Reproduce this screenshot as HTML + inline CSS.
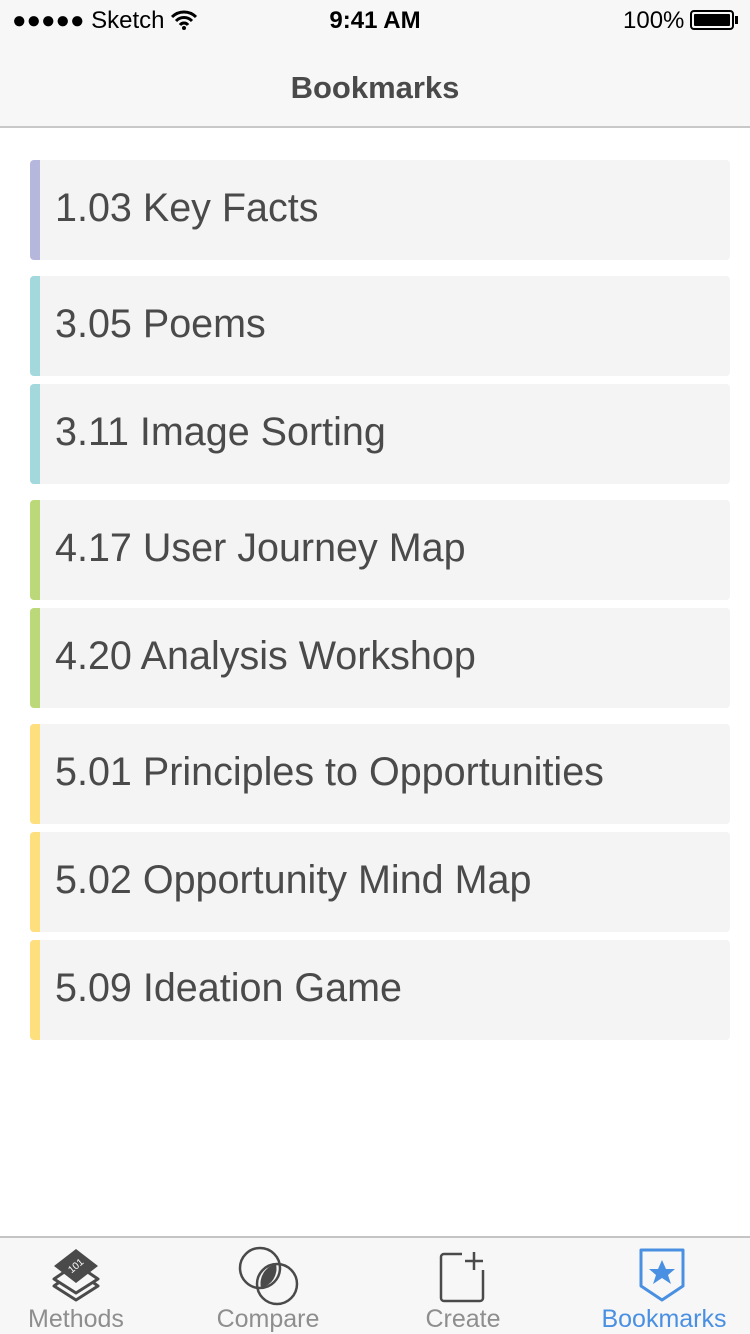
<!DOCTYPE html>
<html><head><style>
body{margin:0;width:750px;height:1334px;position:relative;background:#fff;font-family:"Liberation Sans",sans-serif;overflow:hidden}
.nav{position:absolute;left:0;top:0;width:750px;height:128px;background:#f7f7f7;border-bottom:2px solid #c8c8c8;box-sizing:border-box}
.sb{position:absolute;top:6px;font-size:24px;color:#000;line-height:30px}
.title{position:absolute;top:70px;width:750px;text-align:center;font-size:31px;font-weight:bold;color:#4a4a4a}
.it{position:absolute;left:30px;width:700px;height:100px;background:#f4f4f4;border-radius:4px;overflow:hidden}
.it i{position:absolute;left:0;top:0;width:10px;height:100px}
.it span{position:absolute;left:25px;top:0;line-height:96px;font-size:39.5px;color:#4a4a4a}
.tab{position:absolute;left:0;top:1236px;width:750px;height:98px;background:#f7f7f7;border-top:2px solid #c4c4c4;box-sizing:border-box}
.tl{position:absolute;top:1305px;font-size:25px;color:#8e8e8e;text-align:center;width:188px}
</style></head><body>
<div class="nav">
<div class="sb" style="left:12px">●●●●● Sketch
<svg width="26" height="20" viewBox="0 0 26 20" style="vertical-align:-2px"><path d="M1 7a17 17 0 0 1 24 0M5 11a11 11 0 0 1 16 0M9 15a5 5 0 0 1 8 0" stroke="#000" stroke-width="3" fill="none"/><circle cx="13" cy="18" r="2"/></svg></div>
<div class="sb" style="left:0;width:750px;text-align:center;font-weight:bold">9:41 AM</div>
<div class="sb" style="left:623px">100%</div>
<div style="position:absolute;left:690px;top:10px;width:44px;height:20px;border:2px solid #000;border-radius:4px;box-sizing:border-box;padding:2px"><div style="background:#000;width:100%;height:100%;border-radius:1px"></div></div>
<div style="position:absolute;left:735px;top:16px;width:3px;height:8px;background:#000"></div>
<div class="title">Bookmarks</div>
</div>
<div class="it" style="top:160px"><i style="background:#b6b7dc"></i><span>1.03 Key Facts</span></div>
<div class="it" style="top:276px"><i style="background:#a3d8dc"></i><span>3.05 Poems</span></div>
<div class="it" style="top:384px"><i style="background:#a3d8dc"></i><span>3.11 Image Sorting</span></div>
<div class="it" style="top:500px"><i style="background:#bcd97a"></i><span>4.17 User Journey Map</span></div>
<div class="it" style="top:608px"><i style="background:#bcd97a"></i><span>4.20 Analysis Workshop</span></div>
<div class="it" style="top:724px"><i style="background:#fddf7d"></i><span>5.01 Principles to Opportunities</span></div>
<div class="it" style="top:832px"><i style="background:#fddf7d"></i><span>5.02 Opportunity Mind Map</span></div>
<div class="it" style="top:940px"><i style="background:#fddf7d"></i><span>5.09 Ideation Game</span></div>
<div class="tab"></div>
<svg style="position:absolute;left:50px;top:1248px" width="52" height="54" viewBox="0 0 52 54">
<path d="M26 22 L48 38 L26 52 L4 38 Z" fill="none" stroke="#4a4a4a" stroke-width="3" stroke-linejoin="round"/>
<path d="M26 16 L48 31 L26 45 L4 31 Z" fill="#f7f7f7" stroke="#4a4a4a" stroke-width="3" stroke-linejoin="round"/>
<path d="M26 1 L48 18 L26 35 L4 18 Z" fill="#4a4a4a"/>
<text x="26" y="21" font-size="10" fill="#fff" text-anchor="middle" font-family="Liberation Sans" transform="rotate(-40 26 18)">101</text>
</svg>
<svg style="position:absolute;left:236px;top:1246px" width="66" height="62" viewBox="0 0 66 62">
<circle cx="24" cy="22" r="20" fill="none" stroke="#4a4a4a" stroke-width="2.5"/>
<circle cx="41" cy="38" r="20" fill="none" stroke="#4a4a4a" stroke-width="2.5"/>
<path d="M40 18 A20 20 0 0 1 25 42 A20 20 0 0 1 40 18Z" fill="#4a4a4a"/>
</svg>
<svg style="position:absolute;left:438px;top:1250px" width="50" height="54" viewBox="0 0 50 54">
<path d="M24 4 H6 a3 3 0 0 0-3 3 V48 a3 3 0 0 0 3 3 H42 a3 3 0 0 0 3-3 V20" fill="none" stroke="#4a4a4a" stroke-width="2.5"/>
<path d="M36 2 V20 M27 11 H45" stroke="#4a4a4a" stroke-width="2.5"/>
</svg>
<svg style="position:absolute;left:638px;top:1248px" width="48" height="54" viewBox="0 0 48 54">
<path d="M3 2 H45 V38 L24 52 L3 38 Z" fill="none" stroke="#4a90e2" stroke-width="3" stroke-linejoin="round"/>
<path d="M24 12 l4 9 h9 l-7 6 l3 9 l-9-6 l-9 6 l3-9 l-7-6 h9z" fill="#4a90e2"/>
</svg>
<div class="tl" style="left:-18px">Methods</div>
<div class="tl" style="left:174px">Compare</div>
<div class="tl" style="left:369px">Create</div>
<div class="tl" style="left:570px;color:#4a90e2">Bookmarks</div>
</body></html>
